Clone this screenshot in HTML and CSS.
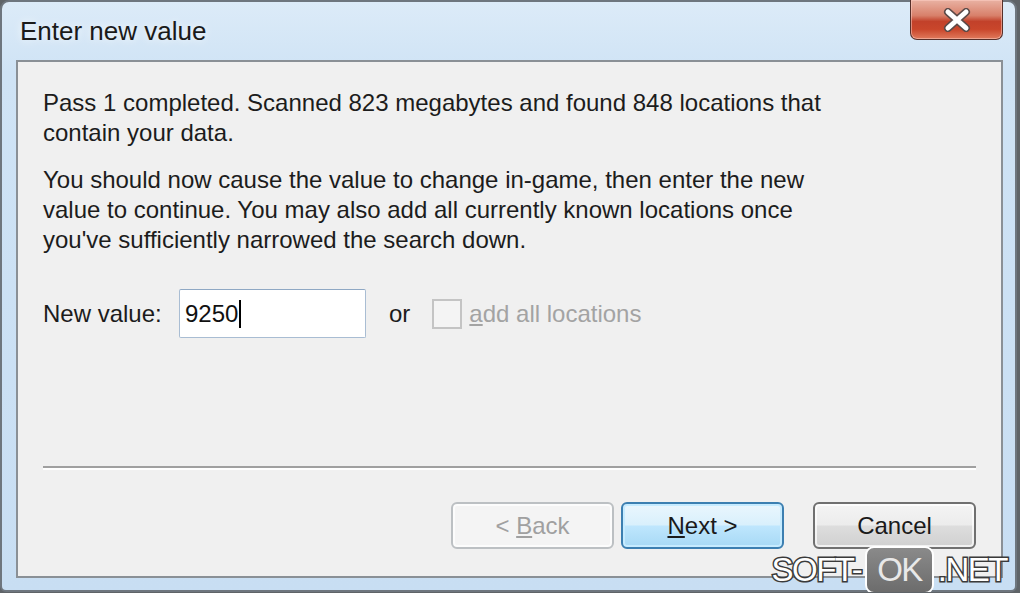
FILE: index.html
```html
<!DOCTYPE html>
<html lang="en">
<head>
  <meta charset="UTF-8">
  <meta name="viewport" content="width=device-width, initial-scale=1.0">
  <title>Enter new value</title>
  <link rel="stylesheet" href="styles.css">
</head>
<body>

  <div class="window">
    <div class="titlebar">
      <div class="title">Enter new value</div>
      <div class="close-btn">
        <svg width="30" height="24" viewBox="0 0 30 24">
          <path d="M6 4 L24 20 M24 4 L6 20" stroke="#5b4a48" stroke-width="8" stroke-linecap="round"/>
          <path d="M6 4 L24 20 M24 4 L6 20" stroke="#ffffff" stroke-width="5" stroke-linecap="round"/>
        </svg>
      </div>
    </div>

    <div class="client">
      <p class="msg">Pass 1 completed. Scanned 823 megabytes and found 848 locations that<br>contain your data.</p>
      <p class="msg">You should now cause the value to change in-game, then enter the new<br>value to continue. You may also add all currently known locations once<br>you've sufficiently narrowed the search down.</p>

      <div class="value-row">
        <label for="new-value">New value:</label>
        <div class="textbox"><span id="new-value">9250</span><span class="caret"></span></div>
        <span class="or">or</span>
        <span class="check disabled"><span class="box"></span><span><u>a</u>dd all locations</span></span>
      </div>

      <div class="separator"></div>

      <div class="buttons">
        <button class="btn" disabled>&lt; <u>B</u>ack</button>
        <button class="btn default"><u>N</u>ext &gt;</button>
        <button class="btn cancel">Cancel</button>
      </div>
    </div>

    <div class="watermark"><span>SOFT-</span><span class="ok">OK</span><span>.NET</span></div>
  </div>

</body>
</html>
```

FILE: styles.css
```css
body {
  margin: 0;
  padding: 0;
  background-color: #5f6468;
  font-family: 'Liberation Sans', Arial, sans-serif;
  overflow: hidden;
}

.window {
  position: relative;
  box-sizing: border-box;
  width: 1017px;
  height: 592px;
  border: 2px solid #6e767e;
  border-radius: 9px 9px 6px 6px;
  background: linear-gradient(to bottom, #dcebf8 0%, #cfe3f5 12%, #c8def3 100%);
  display: flex;
  flex-direction: column;
}

.titlebar {
  display: flex;
  justify-content: space-between;
  align-items: flex-start;
  height: 58px;
}

.title {
  font-size: 26px;
  color: #1a1a1a;
  margin: 14px 0 0 18px;
  text-shadow: 0 0 8px rgba(255, 255, 255, 0.9);
}

.close-btn {
  box-sizing: border-box;
  width: 93px;
  height: 40px;
  margin: -2px 12px 0 0;
  border: 1px solid #57302a;
  border-top: none;
  border-radius: 0 0 7px 7px;
  background: linear-gradient(to bottom, #e9b2a3 0%, #d8806a 40%, #c2412a 55%, #c9462b 75%, #e07a5c 100%);
  box-shadow: inset 0 0 0 1px rgba(255, 210, 200, 0.5);
  display: flex;
  align-items: center;
  justify-content: center;
}

.client {
  flex: 1;
  box-sizing: border-box;
  margin: 0 12px 12px 14px;
  border: 2px solid #8a9096;
  background-color: #f0f0f0;
  padding: 26px 25px 27px 25px;
  display: flex;
  flex-direction: column;
  color: #1c1c1c;
  font-size: 24px;
}

.msg {
  margin: 0 0 17px 0;
  line-height: 30px;
}

.value-row {
  display: flex;
  align-items: center;
  margin-top: 17px;
}

.value-row label {
  width: 136px;
}

.textbox {
  box-sizing: border-box;
  width: 187px;
  height: 49px;
  border: 1px solid #a9bdd3;
  border-top-color: #8fa8c4;
  border-radius: 2px;
  background-color: #ffffff;
  display: flex;
  align-items: center;
  padding-left: 5px;
  font-size: 24px;
  color: #111;
}

.caret {
  display: inline-block;
  width: 2px;
  height: 28px;
  background-color: #000;
  margin-left: 1px;
}

.or {
  margin-left: 23px;
}

.check {
  display: flex;
  align-items: center;
  margin-left: 22px;
}

.check .box {
  box-sizing: border-box;
  width: 30px;
  height: 30px;
  border: 2px solid #c4c4c4;
  background-color: #f4f4f4;
  margin-right: 7px;
}

.check.disabled {
  color: #a3a3a3;
}

.separator {
  margin-top: auto;
  height: 2px;
  background-color: #a0a0a0;
  border-bottom: 2px solid #ffffff;
}

.buttons {
  display: flex;
  justify-content: flex-end;
  margin-top: 32px;
}

.btn {
  box-sizing: border-box;
  width: 163px;
  height: 47px;
  font-family: inherit;
  font-size: 24px;
  color: #1a1a1a;
  border: 2px solid #707070;
  border-radius: 6px;
  background: linear-gradient(to bottom, #f4f4f4 0%, #ececec 48%, #dddddd 52%, #d0d0d0 100%);
  box-shadow: inset 0 0 0 2px rgba(255, 255, 255, 0.7);
  margin-left: 7px;
  padding: 0;
}

.btn:disabled {
  color: #a0a0a0;
  border-color: #bcc0c3;
  background: #f4f4f4;
}

.btn.default {
  border-color: #3c7fb1;
  background: linear-gradient(to bottom, #eaf6fd 0%, #d9f0fc 48%, #bee6fd 52%, #a7d9f5 100%);
  box-shadow: inset 0 0 0 2px #c6ebff;
}

.btn.cancel {
  margin-left: 29px;
}

.watermark {
  position: absolute;
  right: 8px;
  bottom: -4px;
  display: flex;
  align-items: center;
  font-size: 33px;
  letter-spacing: -1.5px;
  color: #ffffff;
  -webkit-text-stroke: 3px #3a3a3a;
  paint-order: stroke fill;
}

.watermark .ok {
  box-sizing: border-box;
  height: 48px;
  padding: 0 10px;
  margin: 0 4px;
  display: flex;
  align-items: center;
  border: 2px solid #ffffff;
  border-radius: 9px;
  background: linear-gradient(to bottom, #8a8a8a 0%, #6c6c6c 100%);
  -webkit-text-stroke: 0;
  color: #e8e8e8;
}
```
